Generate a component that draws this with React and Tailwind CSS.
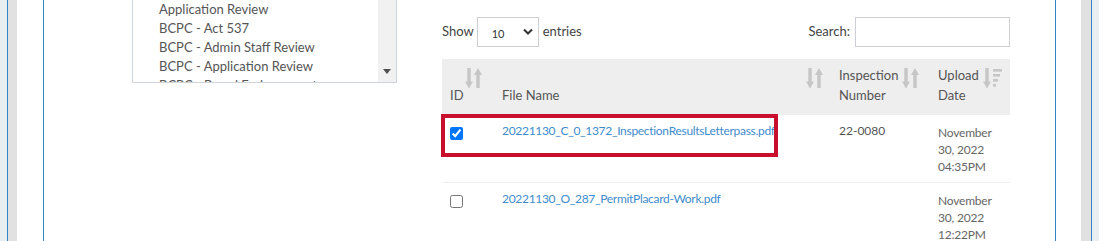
import React from "react";

const SortBoth = () => (
  <svg width="17" height="21" viewBox="0 0 17 21" className="text-[#c6c6c6]" fill="currentColor">
    <rect x="2.3" y="0" width="3.4" height="15" />
    <path d="M0 13.5 L8 13.5 L4 20.5 Z" />
    <rect x="11.3" y="5" width="3.4" height="15" />
    <path d="M9 7 L17 7 L13 0 Z" />
  </svg>
);

const SortDesc = () => (
  <svg width="19" height="21" viewBox="0 0 19 21" className="text-[#c6c6c6]" fill="currentColor">
    <rect x="2.3" y="0" width="3.4" height="15" />
    <path d="M0 13.5 L8 13.5 L4 20.5 Z" />
    <rect x="10" y="1" width="9" height="2.6" />
    <rect x="10" y="6" width="7" height="2.6" />
    <rect x="10" y="11" width="5" height="2.6" />
    <rect x="10" y="16" width="3" height="2.6" />
  </svg>
);

const listItems = [
  "Application Review",
  "BCPC - Act 537",
  "BCPC - Admin Staff Review",
  "BCPC - Application Review",
  "BCPC - Board Endorsement",
];

const rows = [
  {
    file: "20221130_C_0_1372_InspectionResultsLetterpass.pdf",
    num: "22-0080",
    date: ["November", "30, 2022", "04:35PM"],
    checked: true,
  },
  {
    file: "20221130_O_287_PermitPlacard-Work.pdf",
    num: "",
    date: ["November", "30, 2022", "12:22PM"],
    checked: false,
  },
];

export default function App() {
  return (
    <div
      className="w-[1099px] h-[241px] overflow-hidden bg-[#e9eef3] px-[7px] flex"
      style={{ fontFamily: "Lato, 'Open Sans', sans-serif" }}
    >
      <div className="flex-1 flex border-x border-[#2f86c3] bg-[#e1e1e1] pl-[9px] pr-[10px]">
        <div className="flex-1 flex bg-white pl-[26px] pr-[25px]">
          <div className="flex-1 flex border-x border-[#2f86c3] bg-white pl-[88px]">
            {/* Left: listbox */}
            <div className="w-[265px] h-[83px] border-x border-b border-[#cfd4da] flex overflow-hidden">
              <div className="flex-1 pl-[26px] text-[13px] leading-[19px] text-[#555]">
                {listItems.map((t) => (
                  <div key={t} className="whitespace-nowrap">{t}</div>
                ))}
              </div>
              <div className="w-[18px] bg-[#f1f1f1] flex flex-col justify-end items-center pb-[8px]">
                <svg width="8" height="5" viewBox="0 0 8 5">
                  <path d="M0 0 L8 0 L4 5 Z" fill="#505050" />
                </svg>
              </div>
            </div>

            {/* Right: table */}
            <div className="w-[568px] ml-[45px] pt-[17px]">
              <div className="flex items-center justify-between h-[30px] text-[13px] text-[#444]">
                <div className="flex items-center">
                  <span>Show</span>
                  <div className="ml-[3px] w-[62px] h-[30px] border border-[#ccd0d6] flex items-center justify-between pl-[14px] pr-[4px]">
                    <span className="text-[11px] text-[#333] pt-[4px]">10</span>
                    <svg width="12" height="8" viewBox="0 0 12 8">
                      <path d="M2 1.5 L6 5.5 L10 1.5" stroke="#333" strokeWidth="2" fill="none" />
                    </svg>
                  </div>
                  <span className="ml-[4px]">entries</span>
                </div>
                <div className="flex items-center">
                  <span>Search:</span>
                  <div className="ml-[5px] w-[155px] h-[30px] border border-[#ccd0d6]" />
                </div>
              </div>

              <div className="mt-[12px] relative">
                <div className="flex bg-[#eeeeee] h-[56px] text-[13px] leading-[20px] text-[#555]">
                  <div className="relative w-[52px] pl-[8px] flex items-end pb-[10px]">
                    ID
                    <div className="absolute right-[12px] top-[9px]"><SortBoth /></div>
                  </div>
                  <div className="relative w-[337px] pl-[8px] flex items-end pb-[10px]">
                    File Name
                    <div className="absolute right-[8px] top-[9px]"><SortBoth /></div>
                  </div>
                  <div className="relative w-[99px] pl-[8px] flex items-end pb-[10px]">
                    <span>Inspection<br />Number</span>
                    <div className="absolute right-[11px] top-[9px]"><SortBoth /></div>
                  </div>
                  <div className="relative w-[80px] pl-[8px] flex items-end pb-[10px]">
                    <span>Upload<br />Date</span>
                    <div className="absolute right-[8px] top-[9px]"><SortDesc /></div>
                  </div>
                </div>

                {rows.map((r, i) => (
                  <div key={i} className="flex border-b border-[#eeeeee] text-[12px] leading-[17px] text-[#555]">
                    <div className="w-[52px] pl-[8px] pt-[12px]">
                      <input type="checkbox" defaultChecked={r.checked} className="m-0 w-[13px] h-[13px] block" />
                    </div>
                    <div className="w-[337px] pl-[8px] pt-[7px] text-[#3f8ccc] whitespace-nowrap tracking-[-0.3px]">{r.file}</div>
                    <div className="w-[99px] pl-[8px] pt-[7px]">{r.num}</div>
                    <div className="w-[80px] pl-[8px] pt-[9px] pb-[7px] text-[#666] tracking-[-0.2px]">
                      {r.date.map((d) => (
                        <div key={d}>{d}</div>
                      ))}
                    </div>
                  </div>
                ))}

                {/* highlight annotation */}
                <div className="absolute left-[-1px] top-[55px] w-[337px] h-[43px] border-4 border-[#c8102e] pointer-events-none" />
              </div>
            </div>
          </div>
        </div>
      </div>
    </div>
  );
}
